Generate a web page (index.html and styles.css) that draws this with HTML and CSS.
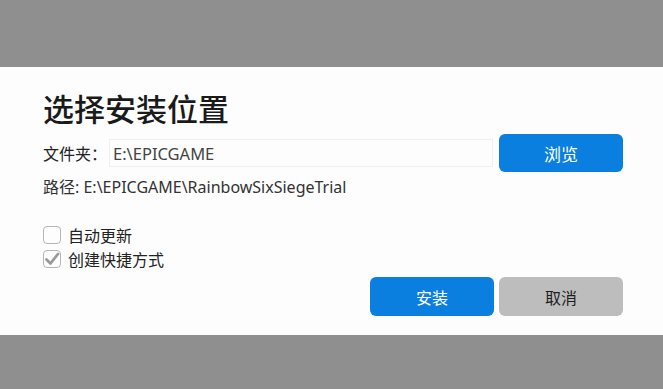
FILE: index.html
```html
<!DOCTYPE html>
<html lang="zh-CN">
<head>
    <meta charset="UTF-8">
    <title>选择安装位置</title>
    <link rel="stylesheet" href="styles.css">
</head>
<body>
    <div class="dialog">
        <h1 class="title">选择安装位置</h1>
        <div class="folder-row">
            <span class="folder-label">文件夹：</span>
            <input type="text" class="folder-input" value="E:\EPICGAME">
            <button class="btn btn-blue btn-browse">浏览</button>
        </div>
        <p class="path">路径: E:\EPICGAME\RainbowSixSiegeTrial</p>
        <div class="options">
            <label class="option">
                <span class="check-box"></span>
                <span>自动更新</span>
            </label>
            <label class="option">
                <span class="check-box">
                    <svg viewBox="0 0 18 18" width="18" height="18">
                        <path d="M3.5 9.5 L7.5 13.5 L15 4" fill="none" stroke="#9a9a9a" stroke-width="2.8" stroke-linecap="round" stroke-linejoin="round"/>
                    </svg>
                </span>
                <span>创建快捷方式</span>
            </label>
        </div>
        <div class="actions">
            <button class="btn btn-blue">安装</button>
            <button class="btn btn-gray">取消</button>
        </div>
    </div>
</body>
</html>
```

FILE: styles.css
```css
body {
    margin: 0;
    background-color: #8f8f8f;
    font-family: "Noto Sans", "Noto Sans CJK SC", sans-serif;
    color: #222;
}

.dialog {
    margin-top: 67px;
    height: 268px;
    box-sizing: border-box;
    background-color: #fdfdfd;
    padding: 22px 40px 0 43px;
}

.title {
    margin: 0;
    font-size: 31px;
    line-height: 40px;
    font-weight: 500;
    color: #1a1a1a;
}

/* folder row */
.folder-row {
    display: flex;
    align-items: center;
    height: 38px;
    margin-top: 5px;
}

.folder-label {
    font-size: 16px;
    width: 66px;
    color: #222;
}

.folder-input {
    flex: 1;
    height: 28px;
    box-sizing: border-box;
    border: 1px solid #efefef;
    background-color: #fdfdfd;
    padding: 0 3px;
    font-family: "Noto Sans", "Noto Sans CJK SC", sans-serif;
    font-size: 16.5px;
    color: #444;
    outline: none;
}

.btn {
    width: 124px;
    border: none;
    border-radius: 6px;
    font-family: "Noto Sans", "Noto Sans CJK SC", sans-serif;
    font-size: 16px;
    cursor: pointer;
}

.btn-blue {
    background-color: #0b7fe0;
    color: #fff;
}

.btn-gray {
    background-color: #bdbdbd;
    color: #1e1e1e;
}

.btn-browse {
    height: 38px;
    margin-left: 6px;
    font-size: 17px;
}

.path {
    margin: 5px 0 0;
    font-size: 16px;
    line-height: 20px;
    color: #333;
}

/* checkboxes */
.options {
    margin-top: 26px;
}

.option {
    display: flex;
    align-items: center;
    height: 24px;
    font-size: 16px;
    color: #222;
}

.check-box {
    width: 18px;
    height: 18px;
    box-sizing: border-box;
    border: 1.5px solid #b5b5b5;
    border-radius: 4px;
    margin-right: 7px;
    position: relative;
}

.check-box svg {
    position: absolute;
    left: -1px;
    top: -1px;
}

.actions {
    display: flex;
    justify-content: flex-end;
    gap: 5px;
    margin-top: 6px;
}

.actions .btn {
    height: 39px;
}
```
